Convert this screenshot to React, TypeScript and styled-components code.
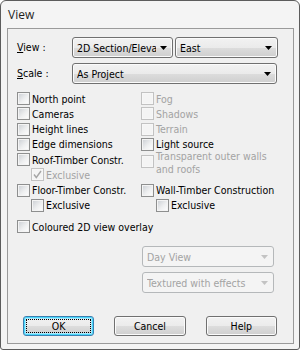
import React from "react";
import styled, { createGlobalStyle, css } from "styled-components";

const GlobalStyle = createGlobalStyle`
  html, body { margin: 0; padding: 0; background: #ffffff; }
  body { font-family: "DejaVu Sans Condensed", "DejaVu Sans", sans-serif; font-size: 10.5px; color: #000; }
  * { box-sizing: border-box; }
`;

const Window = styled.div`
  width: 300px;
  height: 350px;
  border: 1px solid #5c5c5c;
  border-radius: 6px 6px 3px 3px;
  background: #f4f4f4;
  display: flex;
  flex-direction: column;
  padding: 0 5px 5px 6px;
`;

const TitleBar = styled.div`
  height: 27px;
  display: flex;
  align-items: center;
  padding-left: 1px;
  padding-bottom: 1px;
  font-family: "Open Sans", "Noto Sans", sans-serif;
  font-size: 12px;
  color: #1e1e1e;
`;

const Client = styled.div`
  flex: 1;
  border: 1px solid #9a9a9a;
  background: #f0f0f0;
  padding: 8px 16px 7px 9px;
  display: flex;
  flex-direction: column;
`;

const FieldRow = styled.div<{ $cols: string; $mt?: number }>`
  display: grid;
  grid-template-columns: ${(p) => p.$cols};
  column-gap: 2px;
  align-items: center;
  margin-top: ${(p) => p.$mt ?? 0}px;
`;

const Label = styled.span`
  line-height: 21px;
  u { text-decoration: underline; text-underline-offset: 1px; }
`;

const Combo = styled.div<{ $disabled?: boolean }>`
  position: relative;
  height: 21px;
  border: 1px solid #707070;
  border-radius: 3px;
  background: linear-gradient(#f2f2f2 0%, #ebebeb 50%, #dddddd 51%, #cfcfcf 100%);
  box-shadow: inset 0 0 0 1px #fbfbfb;
  display: flex;
  align-items: center;
  padding: 0 16px 0 4px;
  overflow: hidden;
  white-space: nowrap;
  ${(p) =>
    p.$disabled &&
    css`
      border-color: #b5b8ba;
      background: #f4f4f4;
      box-shadow: none;
      color: #a3a3a3;
    `}
`;

const ComboText = styled.span`
  overflow: hidden;
  white-space: nowrap;
  flex: 1;
`;

const Arrow = styled.svg`
  position: absolute;
  right: 5px;
  top: 50%;
  margin-top: -2px;
`;

const OptionsGrid = styled.div`
  display: grid;
  grid-template-columns: 124px 1fr;
  margin-top: 7px;
`;

const Column = styled.div`
  display: flex;
  flex-direction: column;
`;

const Option = styled.label<{ $indent?: number; $disabled?: boolean; $tall?: boolean }>`
  display: flex;
  align-items: center;
  height: 15.25px;
  padding-left: ${(p) => p.$indent ?? 0}px;
  color: ${(p) => (p.$disabled ? "#a3a3a3" : "#000")};
  white-space: nowrap;
  ${(p) =>
    p.$tall &&
    css`
      height: 30.5px;
      align-items: flex-start;
      white-space: normal;
    `}
`;

const Box = styled.span<{ $disabled?: boolean; $tall?: boolean }>`
  flex: none;
  width: 13px;
  height: 13px;
  margin-right: 2px;
  border: 1px solid ${(p) => (p.$disabled ? "#c2c2c2" : "#8e8f8f")};
  background: ${(p) =>
    p.$disabled ? "#f4f4f4" : "linear-gradient(135deg, #c9cdd2 0%, #eeeff0 55%, #ffffff 100%)"};
  box-shadow: inset 0 0 0 1px ${(p) => (p.$disabled ? "#f7f7f7" : "#f4f4f4")};
  display: flex;
  align-items: center;
  justify-content: center;
  ${(p) => p.$tall && "margin-top: 3px;"}
`;

const OptionText = styled.span<{ $tall?: boolean }>`
  ${(p) =>
    p.$tall &&
    css`
      line-height: 12.5px;
      margin-top: -2px;
    `}
`;

const Overlay = styled(Option)`
  margin-top: 6px;
`;

const ModeColumn = styled.div`
  display: flex;
  flex-direction: column;
  gap: 5px;
  margin: 12px 0 0 125px;
  width: 132px;
`;

const ButtonRow = styled.div`
  display: flex;
  gap: 20px;
  margin-top: auto;
  padding-left: 6px;
`;

const Button = styled.div<{ $default?: boolean }>`
  position: relative;
  width: 72px;
  height: 20px;
  border: 1px solid #707070;
  border-radius: 3px;
  background: linear-gradient(#f2f2f2 0%, #ebebeb 50%, #dddddd 51%, #cfcfcf 100%);
  box-shadow: inset 0 0 0 1px #fbfbfb;
  display: flex;
  align-items: center;
  justify-content: center;
  ${(p) =>
    p.$default &&
    css`
      border-color: #3c7fb1;
      box-shadow: inset 0 0 0 1px #48d8fb, inset 0 0 0 2px #aee6fb;
      &::after {
        content: "";
        position: absolute;
        inset: 2px;
        border: 1px dotted #000;
      }
    `}
`;

const ArrowIcon = ({ color = "#000" }: { color?: string }) => (
  <Arrow width="7" height="4" viewBox="0 0 7 4">
    <path d="M0 0H7L3.5 4Z" fill={color} />
  </Arrow>
);

const Check = () => (
  <svg width="9" height="9" viewBox="0 0 9 9">
    <path d="M1 4.5L3.3 7.5L8 1" fill="none" stroke="#a6a6a6" strokeWidth="1.4" />
  </svg>
);

type Opt = { text: string; indent?: number; disabled?: boolean; checked?: boolean; tall?: boolean };

const leftOpts: Opt[] = [
  { text: "North point" },
  { text: "Cameras" },
  { text: "Height lines" },
  { text: "Edge dimensions" },
  { text: "Roof-Timber Constr." },
  { text: "Exclusive", indent: 14, disabled: true, checked: true },
  { text: "Floor-Timber Constr." },
  { text: "Exclusive", indent: 14 },
];

const rightOpts: Opt[] = [
  { text: "Fog", disabled: true },
  { text: "Shadows", disabled: true },
  { text: "Terrain", disabled: true },
  { text: "Light source" },
  { text: "Transparent outer walls and roofs", disabled: true, tall: true },
  { text: "Wall-Timber Construction" },
  { text: "Exclusive", indent: 15 },
];

const OptionItem = ({ o }: { o: Opt }) => (
  <Option $indent={o.indent} $disabled={o.disabled} $tall={o.tall}>
    <Box $disabled={o.disabled} $tall={o.tall}>{o.checked && <Check />}</Box>
    <OptionText $tall={o.tall}>{o.text}</OptionText>
  </Option>
);

export default function App() {
  return (
    <>
      <GlobalStyle />
      <Window>
        <TitleBar>View</TitleBar>
        <Client>
          <FieldRow $cols="53px 101px 103px">
            <Label>
              <u>V</u>iew :
            </Label>
            <Combo>
              <ComboText>2D Section/Elevation</ComboText>
              <ArrowIcon />
            </Combo>
            <Combo>
              <ComboText>East</ComboText>
              <ArrowIcon />
            </Combo>
          </FieldRow>
          <FieldRow $cols="53px 1fr" $mt={5}>
            <Label>
              <u>S</u>cale :
            </Label>
            <Combo>
              <ComboText>As Project</ComboText>
              <ArrowIcon />
            </Combo>
          </FieldRow>
          <OptionsGrid>
            <Column>
              {leftOpts.map((o, i) => (
                <OptionItem key={i} o={o} />
              ))}
            </Column>
            <Column>
              {rightOpts.map((o, i) => (
                <OptionItem key={i} o={o} />
              ))}
            </Column>
          </OptionsGrid>
          <Overlay>
            <Box />
            <OptionText>Coloured 2D view overlay</OptionText>
          </Overlay>
          <ModeColumn>
            <Combo $disabled>
              <ComboText>Day View</ComboText>
              <ArrowIcon color="#c3c3c3" />
            </Combo>
            <Combo $disabled>
              <ComboText>Textured with effects</ComboText>
              <ArrowIcon color="#c3c3c3" />
            </Combo>
          </ModeColumn>
          <ButtonRow>
            <Button $default>OK</Button>
            <Button>Cancel</Button>
            <Button>Help</Button>
          </ButtonRow>
        </Client>
      </Window>
    </>
  );
}
